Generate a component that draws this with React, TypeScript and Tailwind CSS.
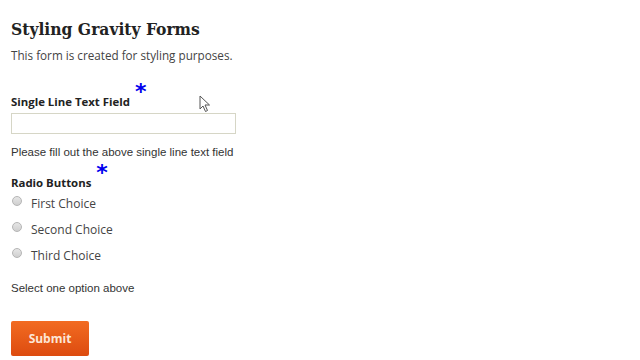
import React from 'react';

const choices = ['First Choice', 'Second Choice', 'Third Choice'];

function Asterisk({ className }: { className: string }) {
  return (
    <span className={`text-[#0000ee] text-[22px] leading-none font-bold ${className}`} style={{ fontFamily: '"DejaVu Sans", sans-serif' }}>
      *
    </span>
  );
}

export default function App() {
  return (
    <div className="relative w-[640px] h-[360px] bg-white overflow-hidden pl-[11px] pt-[18px]">
      <h1
        className="text-[17.3px] font-bold text-[#222] leading-[22px]"
        style={{ fontFamily: '"DejaVu Serif Condensed", "DejaVu Serif", serif', fontStretch: 'condensed' }}
      >
        Styling Gravity Forms
      </h1>
      <p className="mt-[7px] text-[11.7px] text-[#444] leading-[16px]" style={{ fontFamily: '"Open Sans", sans-serif' }}>
        This form is created for styling purposes.
      </p>

      {/* text field */}
      <div className="mt-[18px] flex items-end">
        <label className="text-[11.4px] font-bold text-[#222] leading-[15px]" style={{ fontFamily: '"Open Sans", sans-serif' }}>
          Single Line Text Field
        </label>
        <Asterisk className="ml-[5px] mb-[6px]" />
      </div>
      <input className="mt-[4px] block w-[225px] h-[21px] border border-[#d6d6c6] bg-white" />
      <p className="mt-[11px] text-[11.5px] text-[#333] leading-[14px]" style={{ fontFamily: '"Liberation Sans", Arial, sans-serif' }}>
        Please fill out the above single line text field
      </p>

      {/* radio buttons */}
      <div className="mt-[3px] flex items-end">
        <label className="text-[11.4px] font-bold text-[#222] leading-[15px]" style={{ fontFamily: '"Open Sans", sans-serif' }}>
          Radio Buttons
        </label>
        <Asterisk className="ml-[5px] mb-[6px]" />
      </div>
      <div className="mt-[6px] flex flex-col gap-[10px]">
        {choices.map((c) => (
          <div key={c} className="flex items-start">
            <span className="ml-[1px] w-[10px] h-[10px] rounded-full border border-[#b5b5b5] bg-gradient-to-b from-[#e6e6e6] to-[#cfcfcf]" />
            <span className="ml-[9px] text-[12px] text-[#444] leading-[16px]" style={{ fontFamily: '"Open Sans", sans-serif' }}>
              {c}
            </span>
          </div>
        ))}
      </div>
      <p className="mt-[17px] text-[11.5px] text-[#333] leading-[14px]" style={{ fontFamily: '"Liberation Sans", Arial, sans-serif' }}>
        Select one option above
      </p>

      <button
        className="mt-[26px] w-[78px] h-[35px] rounded-[2px] bg-gradient-to-b from-[#f26b21] to-[#dd4b0f] text-[#fde6d6] text-[12px] font-bold"
        style={{ fontFamily: '"Open Sans", sans-serif' }}
      >
        Submit
      </button>

      {/* mouse cursor */}
      <svg className="absolute left-[199px] top-[95px]" width="12" height="18" viewBox="0 0 12 18">
        <path d="M1 1 L1 14 L4 11 L6.5 16.5 L8.5 15.5 L6 10 L10.5 10 Z" fill="#fff" stroke="#555" strokeWidth="1" strokeLinejoin="round" />
      </svg>
    </div>
  );
}
